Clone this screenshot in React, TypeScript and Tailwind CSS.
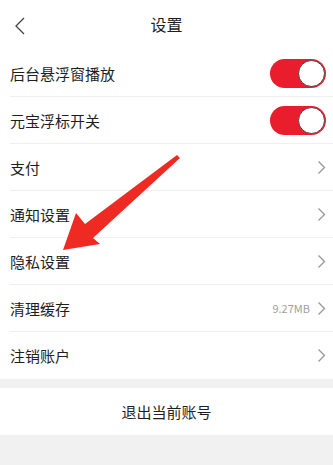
import React from 'react';

const Chevron = () => (
  <svg width="9" height="15" viewBox="0 0 9 15" className="shrink-0">
    <polyline points="1.5,1.5 7.5,7.5 1.5,13.5" fill="none" stroke="#9a9a9a" strokeWidth="1.4" />
  </svg>
);

const Toggle = () => (
  <div className="w-[56px] h-[29px] rounded-full bg-[#ea1d2c] flex items-center justify-end p-[1px]">
    <div className="w-[27px] h-[27px] rounded-full bg-white border border-[#5a3a40]" />
  </div>
);

type Row = { label: string; kind: 'toggle' | 'link'; extra?: string };

const rows: Row[] = [
  { label: '后台悬浮窗播放', kind: 'toggle' },
  { label: '元宝浮标开关', kind: 'toggle' },
  { label: '支付', kind: 'link' },
  { label: '通知设置', kind: 'link' },
  { label: '隐私设置', kind: 'link' },
  { label: '清理缓存', kind: 'link', extra: '9.27MB' },
  { label: '注销账户', kind: 'link' },
];

export default function App() {
  return (
    <div
      className="relative w-[333px] h-[465px] bg-[#f1f1f1] overflow-hidden text-[#1e1e1e]"
      style={{ fontFamily: '"Noto Sans CJK SC", "Noto Sans", sans-serif' }}
    >
      {/* Header */}
      <div className="h-[50px] bg-white flex items-center relative">
        <svg width="12" height="18" viewBox="0 0 12 18" className="absolute left-[14px] top-[17px]">
          <polyline points="10,1 2,9 10,17" fill="none" stroke="#444" strokeWidth="1.3" />
        </svg>
        <div className="flex-1 text-center text-[16px] leading-none pb-[2px]">设置</div>
      </div>

      {/* Settings list */}
      <div className="bg-white">
        {rows.map((r, i) => (
          <div key={r.label} className="pl-[10px]">
            <div
              className={
                'h-[47px] flex items-center justify-between pr-[7px] ' +
                (i < rows.length - 1 ? 'border-b border-[#efefef]' : '')
              }
            >
              <span className="text-[15px] leading-none">{r.label}</span>
              {r.kind === 'toggle' ? (
                <Toggle />
              ) : (
                <div className="flex items-center gap-[7px]">
                  {r.extra && <span className="text-[11px] text-[#a0a0a0]">{r.extra}</span>}
                  <Chevron />
                </div>
              )}
            </div>
          </div>
        ))}
      </div>

      <div className="h-[9px]" />

      {/* Logout */}
      <div className="h-[47px] bg-white flex items-center justify-center">
        <span className="text-[15px] leading-none">退出当前账号</span>
      </div>

      {/* Red annotation arrow */}
      <svg width="333" height="465" className="absolute left-0 top-0 pointer-events-none">
        <polygon
          points="177,155 180,158 93,238 100,244 63,250 76,213 85,224"
          fill="#ee2a22"
        />
      </svg>
    </div>
  );
}
